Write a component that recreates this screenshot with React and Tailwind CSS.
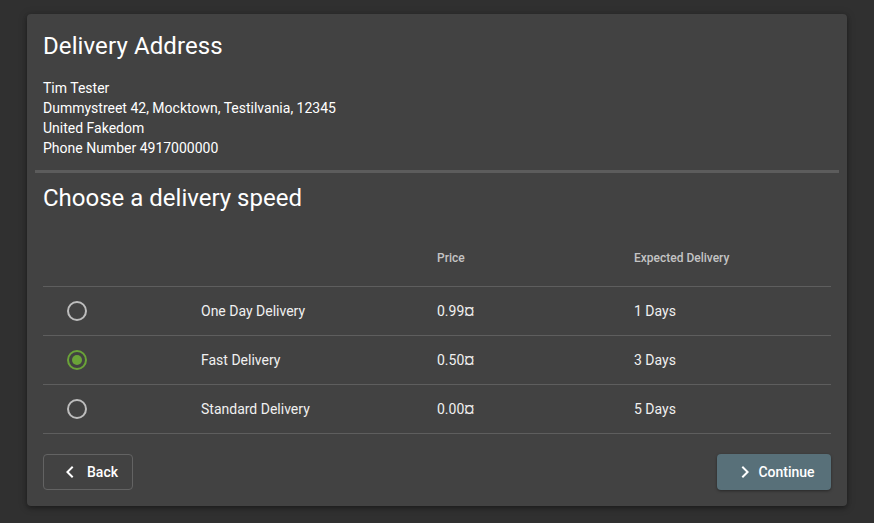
import React from "react";

const rows = [
  { name: "One Day Delivery", price: "0.99¤", days: "1 Days", checked: false },
  { name: "Fast Delivery", price: "0.50¤", days: "3 Days", checked: true },
  { name: "Standard Delivery", price: "0.00¤", days: "5 Days", checked: false },
];

function Radio({ checked }) {
  return (
    <div
      className={
        "w-[20px] h-[20px] rounded-full border-2 flex items-center justify-center " +
        (checked ? "border-[#6aa338]" : "border-[#bdbdbd]")
      }
    >
      {checked && <div className="w-[10px] h-[10px] rounded-full bg-[#6aa338]" />}
    </div>
  );
}

export default function App() {
  return (
    <div
      className="w-[874px] h-[523px] bg-[#303030] pt-[14px] pl-[27px]"
      style={{ fontFamily: "Roboto, 'Liberation Sans', sans-serif" }}
    >
      <div className="w-[820px] h-[492px] bg-[#424242] rounded-[4px] shadow-[0_2px_4px_rgba(0,0,0,0.3),0_1px_10px_rgba(0,0,0,0.2)] pt-[16px] text-white">
        <div className="px-[16px]">
          <h1 className="text-[24px] leading-[32px] font-normal tracking-[0.1px]">Delivery Address</h1>
          <div className="mt-[16px] text-[14px] leading-[20px] text-white">
            <div>Tim Tester</div>
            <div>Dummystreet 42, Mocktown, Testilvania, 12345</div>
            <div>United Fakedom</div>
            <div>Phone Number 4917000000</div>
          </div>
        </div>
        <div className="mx-[8px] mt-[12px] h-[3px] bg-[#5c5c5c]" />
        <div className="px-[16px]">
          <h2 className="mt-[9px] text-[24px] leading-[32px] font-normal">Choose a delivery speed</h2>
          <div className="mt-[16px]">
            <div className="grid grid-cols-[158px_236px_197px_197px] h-[57px] items-center border-b border-[#5e5e5e] text-[12px] text-[#c4c4c4] font-medium">
              <div />
              <div />
              <div>Price</div>
              <div>Expected Delivery</div>
            </div>
            {rows.map((r) => (
              <div
                key={r.name}
                className="grid grid-cols-[158px_236px_197px_197px] h-[49px] items-center border-b border-[#5e5e5e] text-[14px] text-[#f0f0f0]"
              >
                <div className="pl-[24px]">
                  <Radio checked={r.checked} />
                </div>
                <div>{r.name}</div>
                <div>{r.price}</div>
                <div>{r.days}</div>
              </div>
            ))}
          </div>
          <div className="mt-[20px] flex justify-between">
            <button className="w-[90px] h-[36px] rounded-[4px] border border-[#636363] flex items-center justify-center gap-[5px] text-[14px] font-medium text-white">
              <svg width="24" height="24" viewBox="0 0 24 24">
                <path d="M15.41 7.41 14 6l-6 6 6 6 1.41-1.41L10.83 12z" fill="white" />
              </svg>
              Back
            </button>
            <button className="w-[114px] h-[36px] rounded-[4px] bg-[#587079] shadow-[0_1px_3px_rgba(0,0,0,0.4)] flex items-center justify-center gap-[1px] text-[14px] font-medium text-white">
              <svg width="24" height="24" viewBox="0 0 24 24">
                <path d="M10 6 8.59 7.41 13.17 12l-4.58 4.59L10 18l6-6z" fill="white" />
              </svg>
              Continue
            </button>
          </div>
        </div>
      </div>
    </div>
  );
}
